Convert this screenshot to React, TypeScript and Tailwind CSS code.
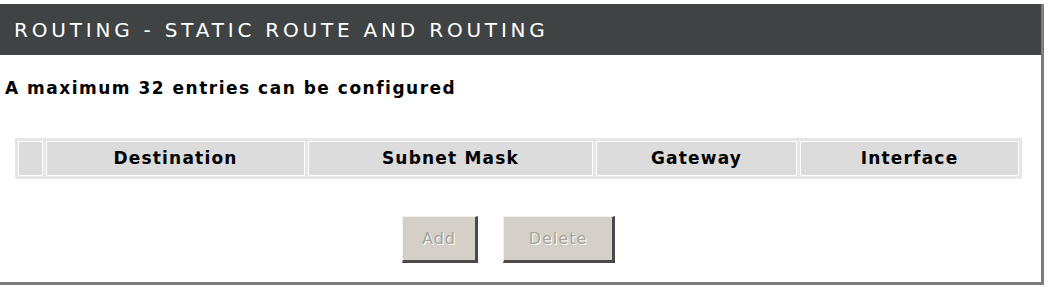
const headers = [
  { label: '', w: 'w-[25px]' },
  { label: 'Destination', w: 'w-[259px]' },
  { label: 'Subnet Mask', w: 'w-[285px]' },
  { label: 'Gateway', w: 'w-[201px]' },
  { label: 'Interface', w: 'flex-1' },
];

function DisabledButton({ label, width }: { label: string; width: string }) {
  return (
    <button
      disabled
      className={`${width} h-[47px] bg-[#d4d0c8] border-t border-l border-t-[#f4f2ee] border-l-[#f4f2ee] border-r-[3px] border-b-[3px] border-r-[#4a4a4a] border-b-[#4a4a4a] text-[16px] tracking-[1px] text-[#a6a39b] [text-shadow:1px_1px_0_#ffffff]`}
    >
      {label}
    </button>
  );
}

export default function App() {
  return (
    <div className="bg-white w-[1048px] h-[287px] pt-1 font-['DejaVu_Sans',Verdana,sans-serif]">
      <div className="w-[1044px] h-[281px] flex flex-col border-r-[3px] border-b-[3px] border-r-[#7d7d7d] border-b-[#7d7d7d]">
        {/* title bar */}
        <div className="h-[51px] bg-[#404343] flex items-center pl-[14px]">
          <span className="text-white text-[20px] tracking-[3.8px] leading-none">
            ROUTING - STATIC ROUTE AND ROUTING
          </span>
        </div>

        {/* body */}
        <div className="flex-1 flex flex-col">
          <p className="mt-[25px] pl-[5px] text-[17px] tracking-[1.5px] font-bold text-black leading-none">
            A maximum 32 entries can be configured
          </p>

          <div className="mt-[41px] ml-[15px] w-[1007px] bg-[#e6e6e6] p-[3px] flex gap-[3px]">
            {headers.map((h, i) => (
              <div
                key={i}
                className={`${h.w} h-[35px] bg-[#dcdcdc] border border-white flex items-center justify-center text-[17px] tracking-[1.2px] font-bold text-black`}
              >
                {h.label}
              </div>
            ))}
          </div>

          <div className="mt-[37px] flex justify-center gap-[25px] pr-[24px]">
            <DisabledButton label="Add" width="w-[76px]" />
            <DisabledButton label="Delete" width="w-[112px]" />
          </div>
        </div>
      </div>
    </div>
  );
}
